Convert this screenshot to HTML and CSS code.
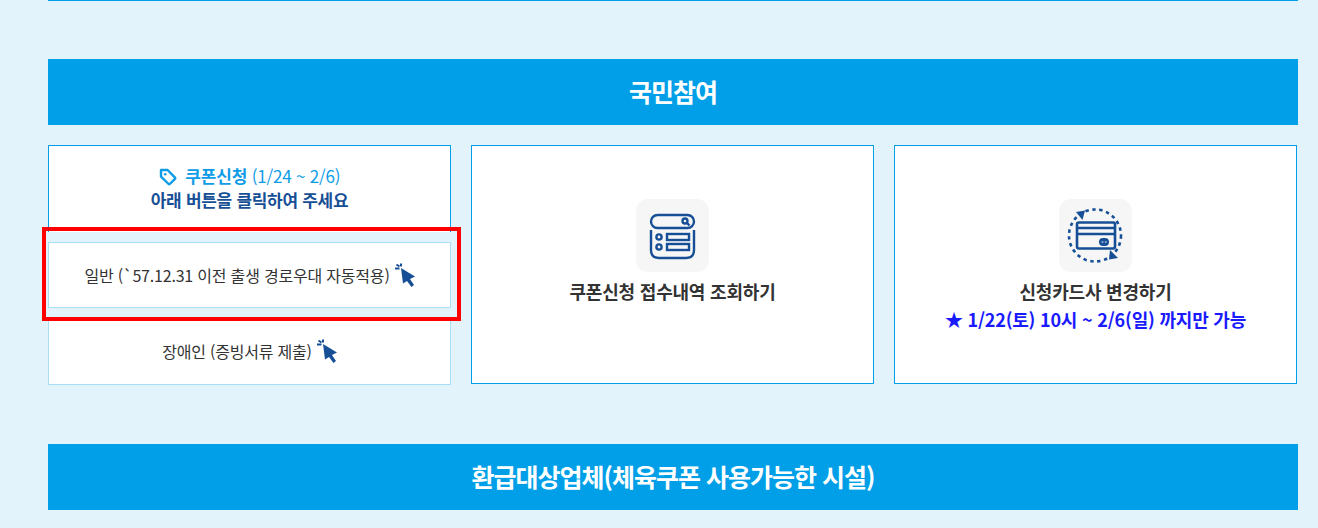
FILE: index.html
```html
<!DOCTYPE html>
<html lang="ko">
  <head>
    <meta charset="UTF-8" />
    <meta name="viewport" content="width=device-width, initial-scale=1.0" />
    <title>국민참여</title>
    <link rel="stylesheet" href="styles.css">
  </head>
  <body>
    <div class="wrap">
      <div class="top-line"></div>

      <h2 class="section-title">국민참여</h2>

      <div class="cards">
        <div class="coupon">
          <div class="coupon-head">
            <p class="coupon-title">
              <svg class="tag-icon" viewBox="0 0 18 18" width="18" height="18">
                <path d="M2 2 H8.6 L16 9.6 Q16.6 10.2 16 10.8 L10.8 16 Q10.2 16.6 9.6 16 L2 8.6 Z" fill="none" stroke="#0f9ce6" stroke-width="2.4" stroke-linejoin="round" />
                <circle cx="6.2" cy="6.2" r="1.3" fill="#0f9ce6" />
              </svg>
              <b>쿠폰신청</b> (1/24 ~ 2/6)
            </p>
            <p class="coupon-sub">아래 버튼을 클릭하여 주세요</p>
          </div>
          <a class="coupon-btn" href="#">
            일반 (`57.12.31 이전 출생 경로우대 자동적용)
            <svg class="click-icon" viewBox="0 0 21 24" width="21" height="24">
              <path d="M7 5 L21 13.5 L16 16 L20 22 L17.5 24 L13 18 L9 20.5 Z" fill="#174f96" />
              <path d="M1 5.5 H5.5 M2.5 1.5 L5.5 3.5 M7 0.5 V3.5" stroke="#174f96" stroke-width="2" fill="none" />
            </svg>
          </a>
          <a class="coupon-btn coupon-btn-last" href="#">
            장애인 (증빙서류 제출)
            <svg class="click-icon" viewBox="0 0 21 24" width="21" height="24">
              <path d="M7 5 L21 13.5 L16 16 L20 22 L17.5 24 L13 18 L9 20.5 Z" fill="#174f96" />
              <path d="M1 5.5 H5.5 M2.5 1.5 L5.5 3.5 M7 0.5 V3.5" stroke="#174f96" stroke-width="2" fill="none" />
            </svg>
          </a>
          <div class="red-box"></div>
        </div>

        <a class="card" href="#">
          <span class="icon-box">
            <svg viewBox="0 0 73 73" width="73" height="73" fill="none" stroke="#174f96" stroke-width="2.4">
              <rect x="15" y="16" width="43" height="13" rx="6.5" />
              <circle cx="49" cy="22" r="2.5" />
              <path d="M51 24 L53.5 26.5" />
              <path d="M15 31 V51 Q15 59 23 59 H50 Q58 59 58 51 V31" />
              <circle cx="23" cy="38" r="2.6" />
              <circle cx="23" cy="48" r="2.6" />
              <rect x="31" y="35" width="22" height="6" />
              <rect x="31" y="45" width="22" height="6" />
            </svg>
          </span>
          <span class="card-text">쿠폰신청 접수내역 조회하기</span>
        </a>

        <a class="card" href="#">
          <span class="icon-box">
            <svg viewBox="0 0 73 73" width="73" height="73" fill="none" stroke="#174f96" stroke-width="2.6">
              <circle cx="36" cy="36.5" r="26" stroke-dasharray="3.4 3.6" />
              <rect x="18" y="23.5" width="38" height="26" rx="2" />
              <path d="M18 29 H56 M18 35 H56" />
              <rect x="40" y="39" width="10" height="8" rx="4" fill="#174f96" stroke="none" />
              <circle cx="43.5" cy="43" r="1.1" fill="#8fa9cc" stroke="none" />
              <circle cx="46.8" cy="43" r="1.1" fill="#8fa9cc" stroke="none" />
              <path d="M17 13 L26 11.5 L23.5 21 Z" fill="#174f96" stroke="none" />
              <path d="M51 51 L59 59 L50 60.5 Z" fill="#174f96" stroke="none" />
            </svg>
          </span>
          <span class="card-text">신청카드사 변경하기</span>
          <span class="card-note">★ 1/22(토) 10시 ~ 2/6(일) 까지만 가능</span>
        </a>
      </div>

      <h2 class="section-title section-title-next">환급대상업체(체육쿠폰 사용가능한 시설)</h2>
    </div>
  </body>
</html>
```

FILE: styles.css
```css
* {
  box-sizing: border-box;
}

body {
  margin: 0;
  background-color: #e2f3fc;
  font-family: "Noto Sans CJK KR", "Noto Sans", sans-serif;
  color: #333;
  overflow: hidden;
}

p {
  margin: 0;
}

a {
  color: inherit;
  text-decoration: none;
}

.wrap {
  width: 1250px;
  margin-left: 48px;
  height: 528px;
}

.top-line {
  height: 1px;
  background: #009fe8;
}

.section-title {
  margin: 58px 0 20px;
  height: 66px;
  line-height: 65px;
  background: #009fe8;
  color: #fff;
  text-align: center;
  font-size: 25px;
  font-weight: 700;
  letter-spacing: -1px;
}

.section-title-next {
  margin-top: 60px;
  margin-bottom: 0;
}

.cards {
  display: flex;
  gap: 20px;
  height: 239px;
}

.coupon {
  position: relative;
  width: 403px;
  display: flex;
  flex-direction: column;
  gap: 10px;
}

.coupon-head {
  height: 87px;
  flex-shrink: 0;
  padding-top: 18px;
  background: #fff;
  border: 1px solid #009fe8;
  border-bottom: 0;
  text-align: center;
  font-weight: 700;
  font-size: 17px;
  line-height: 24px;
  letter-spacing: -0.3px;
}

.coupon-title {
  color: #0f9ce6;
  font-weight: 400;
  letter-spacing: -0.2px;
}

.coupon-title b {
  font-weight: 700;
}

.tag-icon {
  vertical-align: -3px;
  margin-right: 4px;
}

.coupon-sub {
  color: #174f96;
}

.coupon-btn {
  height: 66px;
  flex-shrink: 0;
  display: flex;
  align-items: center;
  justify-content: center;
  gap: 4px;
  background: #fff;
  border: 1px solid #a8def7;
  font-size: 16px;
  letter-spacing: -0.2px;
}

.coupon-btn-last {
  margin-top: 1px;
  padding-bottom: 2px;
}

.red-box {
  position: absolute;
  left: -6px;
  top: 82px;
  width: 419px;
  height: 94px;
  border: 4px solid #f00;
}

.card {
  width: 403px;
  padding-top: 53px;
  display: flex;
  flex-direction: column;
  align-items: center;
  background: #fff;
  border: 1px solid #009fe8;
}

.icon-box {
  width: 73px;
  height: 73px;
  background: #f6f6f6;
  border-radius: 12px;
  margin-bottom: 5px;
}

.icon-box svg {
  display: block;
}

.card-text {
  font-size: 18px;
  font-weight: 700;
  line-height: 28px;
  letter-spacing: -0.2px;
}

.card-note {
  font-size: 18px;
  font-weight: 700;
  line-height: 28px;
  letter-spacing: -0.2px;
  color: #1a1aff;
}
```
